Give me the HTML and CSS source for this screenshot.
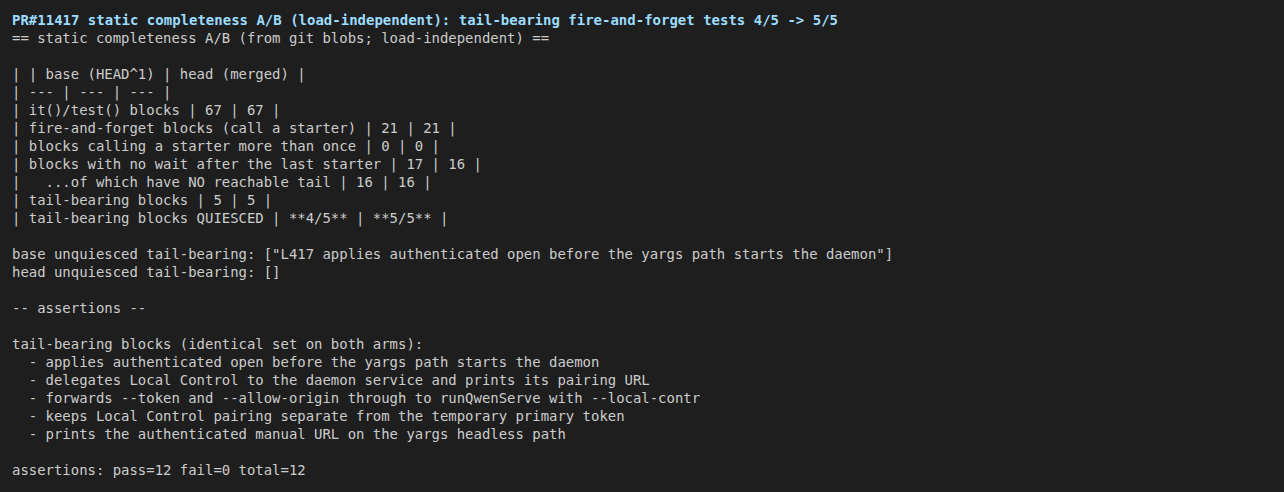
FILE: index.html
```html
<!DOCTYPE html>
<html>
<head>
<meta charset="utf-8">
<link rel="stylesheet" href="styles.css">
</head>
<body>
<div class="term">
<div class="title">PR#11417 static completeness A/B (load-independent): tail-bearing fire-and-forget tests 4/5 -&gt; 5/5</div>
<pre class="out">== static completeness A/B (from git blobs; load-independent) ==

| | base (HEAD^1) | head (merged) |
| --- | --- | --- |
| it()/test() blocks | 67 | 67 |
| fire-and-forget blocks (call a starter) | 21 | 21 |
| blocks calling a starter more than once | 0 | 0 |
| blocks with no wait after the last starter | 17 | 16 |
|   ...of which have NO reachable tail | 16 | 16 |
| tail-bearing blocks | 5 | 5 |
| tail-bearing blocks QUIESCED | **4/5** | **5/5** |

base unquiesced tail-bearing: ["L417 applies authenticated open before the yargs path starts the daemon"]
head unquiesced tail-bearing: []

-- assertions --

tail-bearing blocks (identical set on both arms):
  - applies authenticated open before the yargs path starts the daemon
  - delegates Local Control to the daemon service and prints its pairing URL
  - forwards --token and --allow-origin through to runQwenServe with --local-contr
  - keeps Local Control pairing separate from the temporary primary token
  - prints the authenticated manual URL on the yargs headless path

assertions: pass=12 fail=0 total=12</pre>
</div>
</body>
</html>
```
FILE: styles.css
```css
html, body {
  margin: 0;
  padding: 0;
  background: #1e1e1e;
}
.term {
  padding: 11px 12px;
  font-family: "DejaVu Sans Mono", monospace;
  font-size: 14px;
  line-height: 18px;
  color: #cccccc;
}
.title {
  color: #9cdcfe;
  font-weight: bold;
  white-space: pre;
}
.out {
  margin: 0;
  font-family: inherit;
  font-size: 13.95px;
  line-height: 18px;
  white-space: pre;
}
```
